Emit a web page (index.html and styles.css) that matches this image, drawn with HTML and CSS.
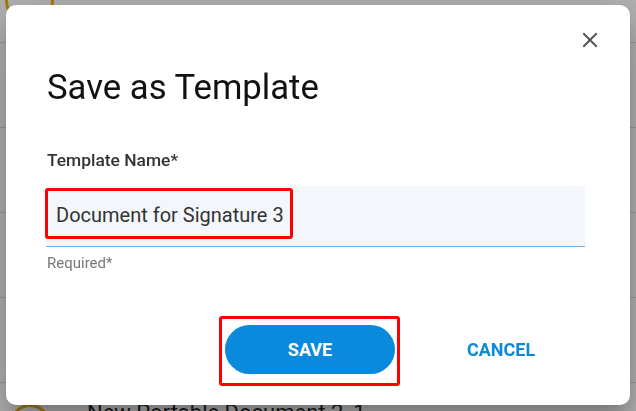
FILE: index.html
```html
<!DOCTYPE html>
<html lang="en">
<head>
<meta charset="utf-8">
<title>Save as Template</title>
<link rel="stylesheet" href="styles.css">
</head>
<body>
<div class="page">
  <div class="row row-first"><span class="avatar avatar-top"></span></div>
  <div class="row"></div>
  <div class="row"></div>
  <div class="row"></div>
  <div class="row"></div>
  <div class="row row-last"><span class="avatar"></span><span class="doc-name">New Portable Document 2_1</span></div>
</div>
<div class="scrim"></div>
<div class="dialog" role="dialog">
  <button class="close-btn" aria-label="Close">
    <svg width="16" height="16" viewBox="0 0 16 16"><path d="M2 2 L14 14 M14 2 L2 14" stroke="#555" stroke-width="2" fill="none" stroke-linecap="square"/></svg>
  </button>
  <h1 class="title">Save as Template</h1>
  <div class="label">Template Name*</div>
  <div class="field">
    <span class="field-text">Document for Signature 3</span>
    <span class="highlight highlight-field"></span>
  </div>
  <div class="helper">Required*</div>
  <div class="actions">
    <div class="save-wrap">
      <button class="btn-save">SAVE</button>
      <span class="highlight highlight-save"></span>
    </div>
    <button class="btn-cancel">CANCEL</button>
  </div>
</div>
</body>
</html>
```

FILE: styles.css
```css
html, body {
  margin: 0;
  padding: 0;
  width: 636px;
  height: 411px;
  overflow: hidden;
  background: #fff;
  font-family: Roboto, "Liberation Sans", sans-serif;
}

.page {
  display: flex;
  flex-direction: column;
}

.row {
  height: 84px;
  border-bottom: 1px solid #dcdcdc;
  display: flex;
  align-items: flex-start;
  flex-shrink: 0;
}

.row-first {
  height: 42px;
  padding-left: 5px;
}

.row-last {
  height: 28px;
  padding-left: 10px;
  padding-top: 21px;
  overflow: hidden;
  border-bottom: 0;
}

.avatar {
  width: 40px;
  height: 40px;
  border: 3px solid #f0b014;
  border-radius: 50%;
  flex-shrink: 0;
  box-sizing: border-box;
}

.avatar-top {
  width: 49px;
  height: 49px;
  margin-top: -24px;
}

.doc-name {
  margin-left: 37px;
  margin-top: -4px;
  font-size: 22px;
  line-height: 26px;
  color: #2a2a2a;
  white-space: nowrap;
}

.scrim {
  position: fixed;
  inset: 0;
  background: rgba(0, 0, 0, 0.3);
}

.dialog {
  position: absolute;
  left: 6px;
  top: 5px;
  width: 624px;
  height: 400px;
  box-sizing: border-box;
  padding: 62px 45px 0 41px;
  background: #fff;
  border-radius: 10px;
  box-shadow: 0 11px 15px -7px rgba(0,0,0,.2), 0 24px 38px 3px rgba(0,0,0,.14), 0 9px 46px 8px rgba(0,0,0,.12);
}

.close-btn {
  position: absolute;
  top: 27px;
  right: 32px;
  width: 16px;
  height: 16px;
  padding: 0;
  border: 0;
  background: none;
  display: flex;
}

.title {
  margin: 0;
  font-size: 34.7px;
  line-height: 40px;
  font-weight: 400;
  color: #111;
}

.label {
  margin-top: 43px;
  font-size: 17.4px;
  line-height: 20px;
  font-weight: 500;
  color: #333;
}

.field {
  position: relative;
  margin-top: 16px;
  margin-left: -1px;
  width: 529px;
  height: 43px;
  padding: 17px 0 0 10px;
  background: #f3f7fb;
  border-bottom: 1px solid #6cb4e4;
}

.field-text {
  display: block;
  font-size: 20px;
  line-height: 24px;
  color: #333;
}

.highlight {
  position: absolute;
  box-sizing: border-box;
  border: 3px solid #ff0000;
  border-radius: 3px;
  pointer-events: none;
}

.highlight-field {
  left: -1px;
  top: 2px;
  width: 248px;
  height: 51px;
}

.helper {
  margin-top: 7px;
  font-size: 15px;
  line-height: 18px;
  color: #777;
}

.actions {
  margin-top: 53px;
  display: flex;
  align-items: center;
  padding-left: 178px;
}

.save-wrap {
  position: relative;
  display: flex;
}

.btn-save {
  width: 170px;
  height: 49px;
  border: 0;
  border-radius: 25px;
  background: #0a8adc;
  color: #fff;
  font-family: Roboto, "Liberation Sans", sans-serif;
  font-size: 18px;
  font-weight: 700;
  padding: 0;
}

.highlight-save {
  left: -6px;
  top: -9px;
  width: 181px;
  height: 70px;
}

.btn-cancel {
  margin-left: 72px;
  border: 0;
  background: none;
  padding: 0;
  color: #0a8adc;
  font-family: Roboto, "Liberation Sans", sans-serif;
  font-size: 18px;
  font-weight: 700;
}
```
